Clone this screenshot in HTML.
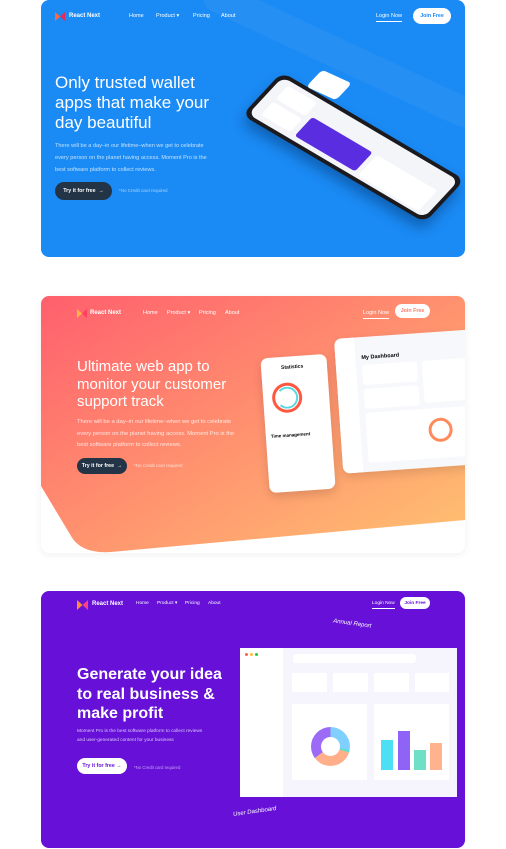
<!DOCTYPE html><html><head><style>
*{margin:0;padding:0;box-sizing:border-box}
body{width:506px;height:849px;background:#fff;font-family:"Liberation Sans",sans-serif;position:relative;overflow:hidden}
.card{position:absolute;left:41px;width:424px;height:257px;border-radius:8px;overflow:hidden}
.a{position:absolute;white-space:nowrap}
.nav{font-size:5.5px;color:#fff}
.h{color:#fff;line-height:1.18}
.p{color:rgba(255,255,255,.75);font-size:5.6px;line-height:12px}
.btn{position:absolute;border-radius:10px;font-size:5.3px;font-weight:bold;display:flex;align-items:center;justify-content:center}
</style></head><body>

<!-- card 1 -->
<div class="card" style="top:0;background:#1a8af4">
 <div class="a" style="left:150px;top:40px;width:300px;height:30px;background:rgba(255,255,255,.05);transform:rotate(25deg);border-radius:15px"></div>
 <svg class="a" style="left:14px;top:12px" width="10" height="9"><path d="M0 0L5 4.5 0 9Z" fill="#ff6a3d"/><path d="M10 0L5 4.5 10 9Z" fill="#e62a5a"/></svg>
 <div class="a nav" style="left:28px;top:13px;font-weight:bold;font-size:6px">React Next</div>
 <div class="a nav" style="left:88px;top:13px">Home</div>
 <div class="a nav" style="left:115px;top:13px">Product ▾</div>
 <div class="a nav" style="left:152px;top:13px">Pricing</div>
 <div class="a nav" style="left:180px;top:13px">About</div>
 <div class="a nav" style="left:335px;top:13px;border-bottom:1px solid #fff;padding-bottom:2px">Login Now</div>
 <div class="btn" style="left:372px;top:8px;width:38px;height:16px;background:#fff;color:#1a8af4">Join Free</div>
 <div class="a h" style="left:14px;top:73px;font-size:17px">Only trusted wallet<br>apps that make your<br>day beautiful</div>
 <div class="a p" style="left:14px;top:140px">There will be a day–in our lifetime–when we get to celebrate<br>every person on the planet having access. Moment Pro is the<br>best software platform to collect reviews.</div>
 <div class="btn" style="left:14px;top:182px;width:57px;height:18px;background:#243447;color:#fff">Try it for free &nbsp;→</div>
 <div class="a" style="left:78px;top:188px;font-size:4.5px;color:rgba(255,255,255,.6)">*No Credit card required</div>
 <!-- phone -->
 <div class="a" style="left:241px;top:72px;width:212px;height:59px;transform-origin:0 0;transform:matrix(0.862,0.508,-0.678,0.729,0,0);background:#1b1b1f;border-radius:10px;box-shadow:4px 8px 12px rgba(0,40,90,.4)">
  <div style="position:absolute;left:4px;top:4px;right:4px;bottom:4px;background:#f4f5f9;border-radius:8px;overflow:hidden">
   <div style="position:absolute;left:10px;top:5px;width:34px;height:18px;background:#fff;border-radius:3px"></div>
   <div style="position:absolute;left:10px;top:27px;width:34px;height:18px;background:#fff;border-radius:3px"></div>
   <div style="position:absolute;left:50px;top:20px;width:70px;height:26px;background:#5b2de0;border-radius:3px"></div>
   <div style="position:absolute;left:125px;top:20px;width:70px;height:28px;background:#fff;border-radius:3px"></div>
  </div>
 </div>
 <div class="a" style="left:268px;top:76px;width:40px;height:18px;background:#fff;border-radius:4px;transform:skewX(-30deg) rotate(20deg)"></div>
</div>

<!-- card 2 -->
<div class="card" style="top:296px;background:#fff;box-shadow:0 2px 8px rgba(0,0,0,.06)">
 <svg class="a" style="left:0;top:0" width="424" height="257"><defs><linearGradient id="g" x1="0" y1="0" x2="1" y2="1"><stop offset="0" stop-color="#ff5f6d"/><stop offset="1" stop-color="#ffc371"/></linearGradient></defs><path d="M0 0H424V224L70 256Q40 258 30 240L0 190Z" fill="url(#g)"/></svg>
 <svg class="a" style="left:36px;top:13px" width="10" height="9"><path d="M0 0L5 4.5 0 9Z" fill="#ffb347"/><path d="M10 0L5 4.5 10 9Z" fill="#ff3f5e"/></svg>
 <div class="a nav" style="left:49px;top:14px;font-weight:bold;font-size:6px">React Next</div>
 <div class="a nav" style="left:102px;top:14px">Home</div>
 <div class="a nav" style="left:126px;top:14px">Product ▾</div>
 <div class="a nav" style="left:158px;top:14px">Pricing</div>
 <div class="a nav" style="left:184px;top:14px">About</div>
 <div class="a nav" style="left:322px;top:14px;border-bottom:1px solid #fff;padding-bottom:2px">Login Now</div>
 <div class="btn" style="left:354px;top:8px;width:35px;height:14px;background:#fff;color:#ff7a6a">Join Free</div>
 <div class="a h" style="left:36px;top:62px;font-size:15px">Ultimate web app to<br>monitor your customer<br>support track</div>
 <div class="a p" style="left:36px;top:121px;line-height:11.7px;font-size:5.8px;color:rgba(255,255,255,.8)">There will be a day–in our lifetime–when we get to celebrate<br>every person on the planet having access. Moment Pro is the<br>best software platform to collect reviews.</div>
 <div class="btn" style="left:36px;top:162px;width:50px;height:16px;background:#243447;color:#fff">Try it for free &nbsp;→</div>
 <div class="a" style="left:93px;top:167px;font-size:4.5px;color:rgba(255,255,255,.7)">*No Credit card required</div>
 <div class="a" style="left:293px;top:43px;width:150px;height:135px;background:#f7f8fc;border-radius:7px;transform:rotate(-4deg);transform-origin:0 0;box-shadow:0 4px 10px rgba(0,0,0,.12)">
  <div style="position:absolute;left:0;top:0;width:20px;height:135px;background:#fff;border-radius:7px 0 0 7px"></div>
  <div style="position:absolute;left:26px;top:18px;font-size:5.5px;font-weight:bold">My Dashboard</div>
  <div style="position:absolute;left:26px;top:28px;width:55px;height:20px;background:#fff;border-radius:3px"></div>
  <div style="position:absolute;left:26px;top:52px;width:55px;height:20px;background:#fff;border-radius:3px"></div>
  <div style="position:absolute;left:86px;top:28px;width:60px;height:42px;background:#fff;border-radius:3px"></div>
  <div style="position:absolute;left:26px;top:76px;width:120px;height:50px;background:#fff;border-radius:3px"></div>
  <div style="position:absolute;left:88px;top:86px;width:24px;height:24px;border:3px solid #ff8a5b;border-radius:50%"></div>
 </div>
 <div class="a" style="left:224px;top:60px;width:66px;height:135px;background:#fff;border-radius:7px;transform:rotate(-4deg);box-shadow:0 4px 10px rgba(0,0,0,.15)">
  <div style="position:absolute;left:9px;top:26px;width:30px;height:30px;border:3px solid #ff5740;border-radius:50%"></div>
  <div style="position:absolute;left:13px;top:30px;width:22px;height:22px;border:2px solid #5ad8e0;border-radius:50%;border-left-color:transparent"></div>
  <div style="position:absolute;left:20px;top:8px;font-size:5px;font-weight:bold">Statistics</div>
  <div style="position:absolute;left:5px;top:76px;font-size:4.5px;font-weight:bold">Time management</div>
 </div>
</div>

<!-- card 3 -->
<div class="card" style="top:591px;background:#6610d8">
 <svg class="a" style="left:36px;top:9px" width="11" height="10"><path d="M0 0L5.5 5 0 10Z" fill="#ff8a3d"/><path d="M11 0L5.5 5 11 10Z" fill="#ff3f7e"/></svg>
 <div class="a nav" style="left:51px;top:10px;font-weight:bold;font-size:6px">React Next</div>
 <div class="a nav" style="left:95px;top:10px;font-size:4.8px">Home</div>
 <div class="a nav" style="left:116px;top:10px;font-size:4.8px">Product ▾</div>
 <div class="a nav" style="left:144px;top:10px;font-size:4.8px">Pricing</div>
 <div class="a nav" style="left:167px;top:10px;font-size:4.8px">About</div>
 <div class="a nav" style="left:331px;top:10px;font-size:4.8px;border-bottom:1px solid #fff;padding-bottom:2px">Login Now</div>
 <div class="btn" style="left:359px;top:6px;width:30px;height:12px;background:#fff;color:#6610d8;font-size:4.8px">Join Free</div>
 <div class="a h" style="left:36px;top:74px;font-size:16px;font-weight:bold;line-height:19.5px">Generate your idea<br>to real business &amp;<br>make profit</div>
 <div class="a p" style="left:36px;top:136px;line-height:9px;font-size:4.8px">Moment Pro is the best software platform to collect reviews<br>and user-generated content for your business</div>
 <div class="btn" style="left:36px;top:167px;width:50px;height:16px;background:#fff;color:#6610d8">Try it for free →</div>
 <div class="a" style="left:93px;top:174px;font-size:4.3px;color:rgba(255,255,255,.6)">*No Credit card required</div>
 <div class="a" style="left:292px;top:30px;font-size:6px;font-style:italic;color:#fff;transform:rotate(8deg)">Annual Report</div>
 <div class="a" style="left:192px;top:218px;font-size:6px;font-style:italic;color:#fff;transform:rotate(-8deg)">User Dashboard</div>
 <div class="a" style="left:199px;top:57px;width:217px;height:149px;background:#f6f4fd">
  <div style="position:absolute;left:0;top:0;width:43px;height:149px;background:#fff"></div>
  <div style="position:absolute;left:5px;top:5px;width:3px;height:3px;border-radius:50%;background:#ff5f57;box-shadow:5px 0 #ffbd2e,10px 0 #28c840"></div>
  <div style="position:absolute;left:53px;top:6px;width:123px;height:9px;background:#fff;border-radius:3px"></div>
  <div style="position:absolute;left:52px;top:25px;width:35px;height:19px;background:#fff"></div>
  <div style="position:absolute;left:93px;top:25px;width:35px;height:19px;background:#fff"></div>
  <div style="position:absolute;left:134px;top:25px;width:35px;height:19px;background:#fff"></div>
  <div style="position:absolute;left:175px;top:25px;width:34px;height:19px;background:#fff"></div>
  <div style="position:absolute;left:52px;top:56px;width:75px;height:76px;background:#fff"></div>
  <div style="position:absolute;left:134px;top:56px;width:75px;height:76px;background:#fff"></div>
  <div style="position:absolute;left:71px;top:79px;width:39px;height:39px;border-radius:50%;background:conic-gradient(#7fd0ff 0 28%,#5ee0c4 28% 30%,#ffb08a 30% 65%,#9b6bf5 65% 100%)"><div style="position:absolute;left:10px;top:10px;width:19px;height:19px;background:#fff;border-radius:50%"></div></div>
  <div style="position:absolute;left:141px;top:92px;width:12px;height:30px;background:#4de0f5"></div>
  <div style="position:absolute;left:158px;top:83px;width:12px;height:39px;background:#8f63f5"></div>
  <div style="position:absolute;left:174px;top:102px;width:12px;height:20px;background:#6fe0c6"></div>
  <div style="position:absolute;left:190px;top:95px;width:12px;height:27px;background:#ffb28e"></div>
 </div>
</div>
</body></html>
